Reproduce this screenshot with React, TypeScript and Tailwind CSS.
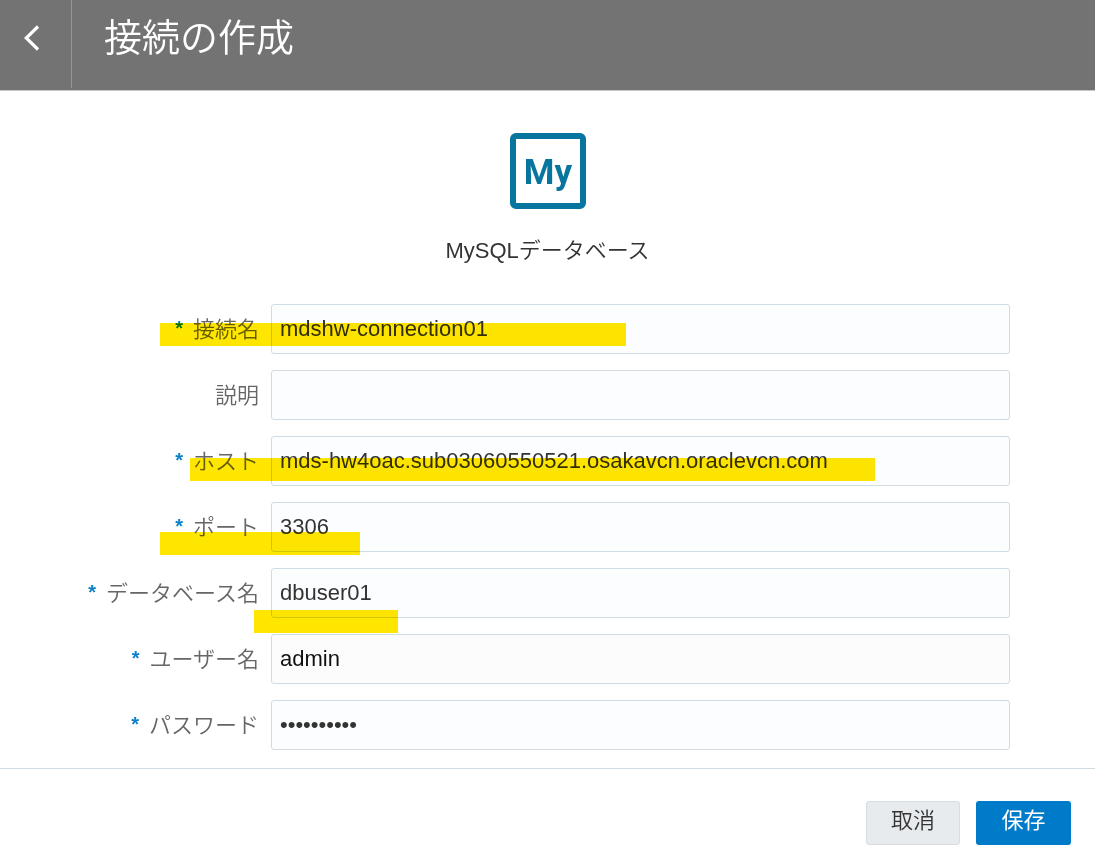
interface Field {
  id: string;
  label: string;
  value: string;
  required?: boolean;
  type?: string;
  input?: string;
  marker?: string;
}

const FIELDS: Field[] = [
  {
    id: 'name',
    label: '接続名',
    value: 'mdshw-connection01',
    required: true,
    marker: 'left-[160px] top-[19px] w-[466px]',
  },
  { id: 'description', label: '説明', value: '' },
  {
    id: 'host',
    label: 'ホスト',
    value: 'mds-hw4oac.sub03060550521.osakavcn.oraclevcn.com',
    required: true,
    marker: 'left-[190px] top-[22px] w-[685px]',
  },
  {
    id: 'port',
    label: 'ポート',
    value: '3306',
    required: true,
    marker: 'left-[160px] top-[30px] w-[200px]',
  },
  {
    id: 'database',
    label: 'データベース名',
    value: 'dbuser01',
    required: true,
    marker: 'left-[254px] top-[42px] w-[144px]',
  },
  { id: 'user', label: 'ユーザー名', value: 'admin', required: true, input: 'bg-[#fcfcfc] text-[#111]' },
  { id: 'password', label: 'パスワード', value: 'secret0123', required: true, type: 'password' },
];

const BackIcon = () => (
  <svg width="16" height="26" viewBox="0 0 16 26" fill="none" stroke="#fff" strokeWidth="3.2">
    <path d="M14 1.5L2.2 13 14 24.5" />
  </svg>
);

const MySqlIcon = () => (
  <svg width="76" height="76" viewBox="0 0 76 76" fill="none" aria-hidden="true">
    <rect x="3" y="3" width="70" height="70" rx="3" stroke="#07759e" strokeWidth="6" />
    <text x="38" y="51" textAnchor="middle" fill="#07759e" className="font-[Roboto,sans-serif] text-[35px] font-bold">
      My
    </text>
  </svg>
);

function FieldRow({ field }: { field: Field }) {
  return (
    <div className="relative flex items-center gap-3 pr-[85px]">
      <label htmlFor={field.id} className="flex w-[259px] shrink-0 justify-end gap-2.5 pt-0.5 font-[350] text-[#666]">
        {field.required && <span className="text-xl leading-7 font-bold text-[#0a7fcb]">*</span>}
        {field.label}
      </label>
      <input
        id={field.id}
        type={field.type ?? 'text'}
        defaultValue={field.value}
        autoComplete="off"
        className={`h-[50px] min-w-0 flex-1 rounded-[3px] border border-[#d0dce4] px-2 outline-none ${field.input ?? 'bg-[#fcfdfe] text-[#333]'}`}
      />
      {field.marker && (
        <span className={`pointer-events-none absolute h-[23px] bg-[#ffe600] mix-blend-multiply ${field.marker}`} />
      )}
    </div>
  );
}

export default function App() {
  return (
    <form
      onSubmit={(e) => e.preventDefault()}
      className="flex min-h-screen flex-col bg-white font-['Liberation_Sans','Noto_Sans_CJK_JP',sans-serif] text-[22px] leading-8"
    >
      <header className="flex h-[91px] border-b border-[#c8c8c8] bg-[#737373] text-white">
        <button
          type="button"
          aria-label="戻る"
          className="mb-0.5 flex w-[72px] justify-center border-r border-[#949494] pt-[25px] pr-2"
        >
          <BackIcon />
        </button>
        <h1 className="pt-3.5 pl-8 text-[38px] leading-[48px] font-[350]">接続の作成</h1>
      </header>

      <main className="flex-1 pt-[42px] pb-[18px]">
        <div className="flex flex-col items-center">
          <MySqlIcon />
          <p className="mt-[26px] font-[350] text-[#333]">MySQLデータベース</p>
        </div>
        <div className="mt-[37px] flex flex-col gap-4">
          {FIELDS.map((field) => (
            <FieldRow key={field.id} field={field} />
          ))}
        </div>
      </main>

      <footer className="flex justify-end gap-4 border-t border-[#d0dce4] px-6 pt-8 pb-[17px]">
        <button
          type="button"
          className="h-11 w-[94px] rounded-[3px] border border-[#d6dde2] bg-[#e7ebee] pb-1 font-[350] text-[#333]"
        >
          取消
        </button>
        <button type="submit" className="h-11 w-[95px] rounded-[3px] bg-[#007bc9] pb-1 text-white">
          保存
        </button>
      </footer>
    </form>
  );
}
